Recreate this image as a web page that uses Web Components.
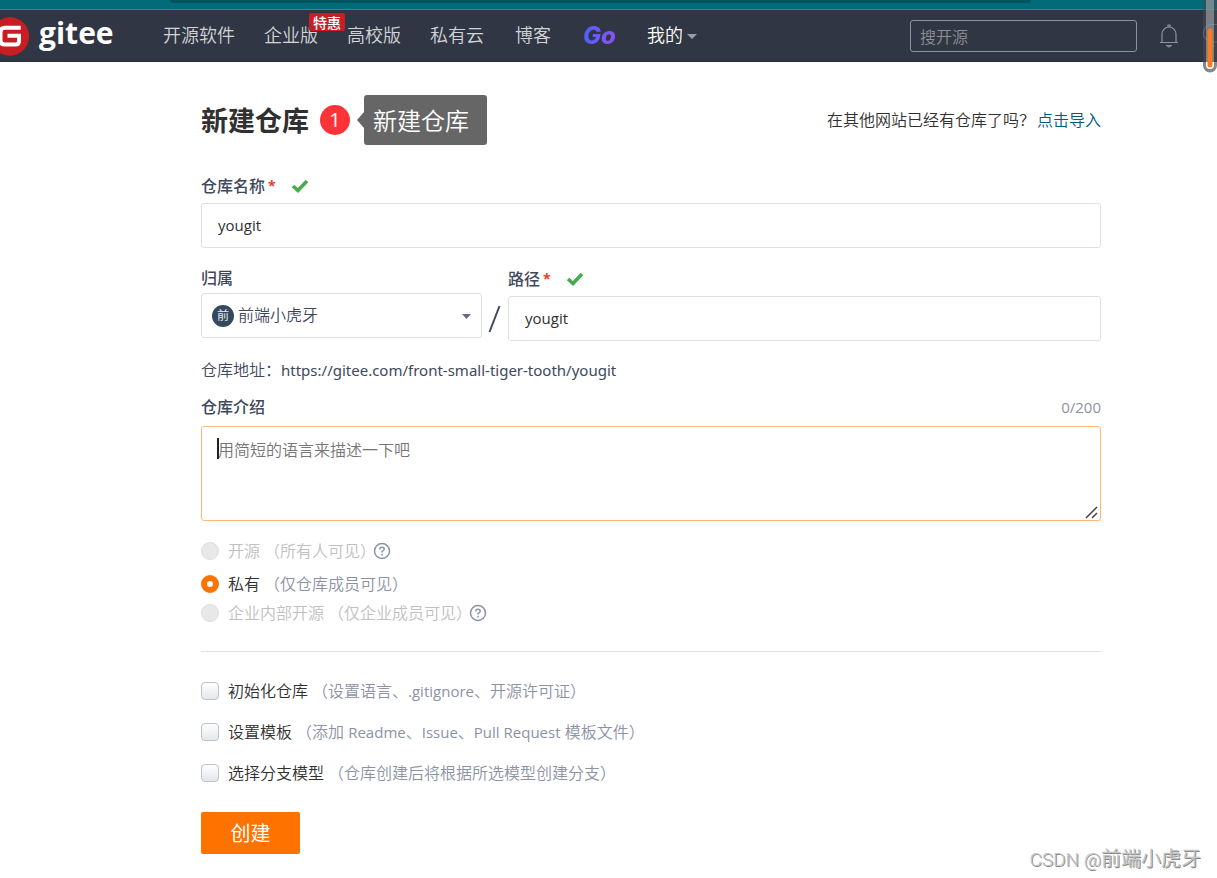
<!DOCTYPE html>
<html lang="zh-CN">
<head>
<meta charset="utf-8">
<meta name="viewport" content="width=device-width, initial-scale=1">
<title>新建仓库 - Gitee</title>
<style>
  body {
    margin: 0;
    background: #fff;
    color: #303030;
    font: 350 16px/24px "Open Sans", "Noto Sans CJK SC", sans-serif;
    --ink: #40485b;
    --muted: #8c92a4;
    --line: #dce0e8;
    --accent: #fe7300;
  }
</style>
</head>
<body>
<gitee-page></gitee-page>

<template id="t-page">
  <style>
    :host { display: block; position: relative; min-height: 878px; }
    main { padding: 33px 116px 24px 201px; }
    .pair { display: grid; grid-template-columns: 281px 26px 1fr; margin-top: 18px; }
    .slash { align-self: end; display: block; width: 26px; height: 45px; }
    .path { padding-top: 1px; }
    .address { margin: 17px 0 0; color: var(--ink); line-height: 24px; }
    .address span { font: 15px/24px "Noto Sans", sans-serif; }
    fieldset { border: 0; margin: 0; padding: 0; min-width: 0; }
    .visibility { margin-top: 18px; display: grid; grid-template-rows: 33px 29px 27px; padding-bottom: 23px; border-bottom: 1px solid var(--line); }
    .options { margin-top: 27px; display: grid; gap: 17px; }
    button { display: block; margin-top: 27px; width: 99px; height: 42px; border: 0; border-radius: 2px; background: var(--accent); color: #fff; font: 20px/42px "Noto Sans CJK SC", sans-serif; padding: 0; }
    .watermark { position: absolute; right: 16px; bottom: 4px; font: 350 20px/28px Roboto, "Noto Sans CJK SC", sans-serif; color: #c4c4c4; text-shadow: 1px 1px 0 #8a8a8a; }
    .watermark span { font-size: 19px; font-weight: 300; }
  </style>
  <gitee-topbar></gitee-topbar>
  <main>
    <page-title></page-title>
    <text-field name="name" label="仓库名称" value="yougit" style="margin-top:29px"></text-field>
    <div class="pair">
      <owner-field></owner-field>
      <svg class="slash" viewBox="0 0 26 45" aria-hidden="true"><path d="M7.500 36L17.500 10" stroke="#40485b" stroke-width="2" fill="none"/></svg>
      <text-field class="path" name="path" label="路径" value="yougit"></text-field>
    </div>
    <p class="address">仓库地址：<span>https://gitee.com/front-small-tiger-tooth/yougit</span></p>
    <intro-field></intro-field>
    <form>
      <fieldset class="visibility" aria-label="是否开源">
        <choice-item type="radio" disabled help label="开源">（所有人可见）</choice-item>
        <choice-item type="radio" checked label="私有">（仅仓库成员可见）</choice-item>
        <choice-item type="radio" disabled help label="企业内部开源">（仅企业成员可见）</choice-item>
      </fieldset>
      <fieldset class="options" aria-label="仓库设置">
        <choice-item type="checkbox" label="初始化仓库">（设置语言、<small>.gitignore</small>、开源许可证）</choice-item>
        <choice-item type="checkbox" label="设置模板">（添加 <small>Readme</small>、<small>Issue</small>、<small>Pull Request</small> 模板文件）</choice-item>
        <choice-item type="checkbox" label="选择分支模型">（仓库创建后将根据所选模型创建分支）</choice-item>
      </fieldset>
      <button type="button">创建</button>
    </form>
  </main>
  <div class="watermark"><span>CSDN @</span>前端小虎牙</div>
</template>

<template id="t-topbar">
  <style>
    :host { display: block; position: relative; }
    .strip { height: 9px; background: #016b79; border-bottom: 1px solid #258c98; padding: 0 186px 0 170px; }
    .strip div { height: 3px; background: #02545e; border-radius: 0 0 4px 4px; }
    header { display: flex; align-items: center; height: 51px; background: #303643; border-bottom: 1px solid #2c2b3a; }
    .logo { display: flex; align-items: center; width: 163px; height: 51px; text-decoration: none; color: #fff; }
    .logo svg { flex: none; }
    .logo b { margin: 0 0 5px 9px; font: 700 30px/36px "Open Sans", sans-serif; }
    nav { display: flex; gap: 29px; }
    .go { position: relative; width: 34px; margin: 1px 1px 0 3px; font: italic 800 24px/28px Inter, sans-serif; color: transparent; background: linear-gradient(90deg, #4b63f6, #9150f0); background-clip: text; -webkit-background-clip: text; text-decoration: none; }
    .search { margin-left: auto; width: 227px; height: 32px; box-sizing: border-box; border: 1px solid #8c92a4; border-radius: 3px; background: transparent; padding: 0 9px; color: #fff; font: 350 16px/24px "Noto Sans CJK SC", sans-serif; }
    .search::placeholder { color: #8f9091; opacity: 1; }
    .bell { margin: 0 38px 0 22px; display: block; }
    .bulb { position: absolute; right: 0; top: 22px; }
    .thumb { position: absolute; right: 0; top: 0; }
  </style>
  <div class="strip"><div></div></div>
  <header>
    <a class="logo" href="#"><svg width="30" height="40" viewBox="0 0 30 40" aria-hidden="true"><circle cx="10" cy="20.500" r="19.200" fill="#c71d23"/><path d="M20.700 11.700H5Q0.500 11.700 0.500 16V24.500Q0.500 28.500 5 28.500H15.500Q19 28.500 19 25V19.700H7.500" fill="none" stroke="#fff" stroke-width="4"/></svg><b>gitee</b></a>
    <nav>
      <nav-link>开源软件</nav-link>
      <nav-link tag="特惠">企业版</nav-link>
      <nav-link>高校版</nav-link>
      <nav-link>私有云</nav-link>
      <nav-link style="margin-left:2px">博客</nav-link>
      <a class="go" href="#">Go</a>
      <nav-link strong>我的</nav-link>
    </nav>
    <input class="search" type="search" placeholder="搜开源" aria-label="搜开源">
    <svg class="bell" width="20" height="24" viewBox="0 0 20 24" fill="none" stroke="#8c92a4" stroke-width="1.200" aria-hidden="true"><path d="M1 18.500H19M3 18.500V10a7 7 0 0 1 14 0V18.500M9 3V1H11V3M7 21.500H13M8.500 22Q10 24 11.500 22"/></svg>
  </header>
  <svg class="bulb" width="16" height="28" viewBox="0 0 16 28" fill="none" stroke="#8c92a4" stroke-width="1.200" aria-hidden="true"><path d="M16 2.500H11a8.500 8.500 0 0 0-4 16H9V24H14M10 20H16"/></svg>
  <svg class="thumb" width="14" height="73" viewBox="0 0 14 73" aria-hidden="true"><path d="M0-4H14V65.500a6.500 6.500 0 0 1-14 0Z" fill="#444a52" fill-opacity=".65"/><path d="M7-4V65" stroke="#b6bcc0" stroke-opacity=".5" stroke-width="8"/><path d="M3 62V65a4 4 0 0 0 8 0V62Z" fill="#fff"/><path d="M7 31V65" stroke="#fe7a1f" stroke-width="5" stroke-linecap="round"/></svg>
</template>

<template id="t-nav">
  <style>
    :host { display: block; position: relative; --c: #d2d4d8; }
    :host([strong]) { --c: #fff; }
    a { display: flex; align-items: center; color: var(--c); text-decoration: none; font: 350 18px/27px "Noto Sans CJK SC", sans-serif; }
    .tag { position: absolute; left: 45px; top: -8px; width: 36px; height: 18px; border-radius: 2px; background: #c71d23; color: #fff; text-align: center; font: 500 14px/18px "Noto Sans CJK SC", sans-serif; z-index: 1; }
    svg { margin: 3px 0 0 4px; }
  </style>
  <a href="#"><slot></slot><svg width="10" height="5" viewBox="0 0 10 5" aria-hidden="true"><path d="M0 0H10L5 5Z" fill="#9a9da5"/></svg></a>
  <span class="tag"></span>
</template>

<template id="t-title">
  <style>
    :host { display: flex; align-items: center; height: 50px; }
    h1 { margin: 0; font: 700 27px/40px "Noto Sans CJK SC", sans-serif; color: #303030; }
    .num { margin-left: 11px; width: 30px; height: 30px; border-radius: 50%; background: #fc3437; color: #fff; text-align: center; font: 20px/30px "Open Sans", sans-serif; }
    .tip { display: flex; align-items: center; margin-left: 7px; }
    .tip span { height: 50px; width: 123px; box-sizing: border-box; padding-left: 9px; background: #666; border-radius: 3px; color: #fff; font: 350 24px/50px "Noto Sans CJK SC", sans-serif; }
    .import { margin-left: auto; display: flex; gap: 2px; }
    a { color: #005980; text-decoration: none; }
  </style>
  <h1>新建仓库</h1>
  <span class="num">1</span>
  <div class="tip"><svg width="7" height="16" viewBox="0 0 7 16" aria-hidden="true"><path d="M7 0V16L0 8Z" fill="#666"/></svg><span>新建仓库</span></div>
  <div class="import"><span>在其他网站已经有仓库了吗？</span><a href="#">点击导入</a></div>
</template>

<template id="t-field">
  <style>
    :host { display: block; }
    .head { display: flex; align-items: center; height: 24px; margin-bottom: 5px; }
    label { color: var(--ink); font-weight: 500; }
    i { margin-left: 3px; color: #f0392c; font-style: normal; font-weight: 700; font-size: 14px; }
    svg { margin-left: 15px; }
    input { display: block; width: 100%; height: 45px; box-sizing: border-box; border: 1px solid var(--line); border-radius: 3px; padding: 0 16px 2px; background: #fff; color: #303030; font: 15px/24px "Open Sans", sans-serif; }
  </style>
  <div class="head"><label for="f"></label><i>*</i><svg width="18" height="14" viewBox="0 0 18 14" aria-hidden="true"><path d="M2 7L7 11.500L16 2" fill="none" stroke="#49ab4d" stroke-width="3.600"/></svg></div>
  <input id="f" type="text">
</template>

<template id="t-owner">
  <style>
    :host { display: block; }
    label { display: block; height: 24px; margin-bottom: 3px; color: var(--ink); font-weight: 500; }
    .box { display: flex; align-items: center; position: relative; height: 45px; box-sizing: border-box; border: 1px solid var(--line); border-radius: 3px; padding-left: 10px; }
    .avatar { flex: none; width: 22px; height: 22px; border-radius: 50%; background: #34495e; color: #e8ebee; text-align: center; font-size: 12px; font-weight: 400; line-height: 22px; }
    select { appearance: none; flex: 1; height: 43px; border: 0; background: transparent; color: var(--ink); padding: 0 30px 4px 4px; font: 350 16px/24px "Noto Sans CJK SC", sans-serif; }
    svg { position: absolute; right: 10px; top: 20px; }
  </style>
  <label for="o">归属</label>
  <div class="box"><span class="avatar">前</span><select id="o"><option>前端小虎牙</option></select><svg width="9" height="5" viewBox="0 0 9 5" aria-hidden="true"><path d="M0 0H9L4.500 5Z" fill="#666c7b"/></svg></div>
</template>

<template id="t-intro">
  <style>
    :host { display: block; margin-top: 13px; }
    .head { display: flex; justify-content: space-between; height: 24px; margin-bottom: 7px; }
    label { color: var(--ink); font-weight: 500; }
    .head span { color: var(--muted); font-size: 15px; font-weight: 400; }
    .box { position: relative; }
    textarea { display: block; width: 100%; height: 95px; box-sizing: border-box; border: 1px solid #ffb878; border-radius: 3px; padding: 10px 16px; margin: 0; resize: none; outline: 0; color: #303030; font: 350 16px/24px "Noto Sans CJK SC", sans-serif; }
    textarea::placeholder { color: #757575; opacity: 1; }
    .caret { position: absolute; left: 16px; top: 12px; width: 2px; height: 21px; background: #222; }
    svg { position: absolute; right: 3px; bottom: 2px; }
  </style>
  <div class="head"><label for="d">仓库介绍</label><span>0/200</span></div>
  <div class="box"><textarea id="d" placeholder="用简短的语言来描述一下吧"></textarea><span class="caret"></span><svg width="13" height="13" viewBox="0 0 13 13" aria-hidden="true"><path d="M1 12L12 1M7 12L12 7" fill="none" stroke="#444" stroke-width="1.500"/></svg></div>
</template>

<template id="t-choice">
  <style>
    :host { display: flex; align-items: center; height: 24px; --c: #303030; --n: var(--muted); }
    :host([disabled]) { --c: #c0c0c0; --n: #c0c0c0; }
    input { appearance: none; flex: none; width: 18px; height: 18px; margin: 0 9px 0 0; box-sizing: border-box; border: 1px solid #c0c2c6; border-radius: 4px; background: linear-gradient(#fff, #e3e6ea); }
    input[type=radio] { border-radius: 50%; }
    input:disabled { border-color: #dedede; background: #e8e8e8; }
    input:checked { border: 6px solid var(--accent); background: #fff; }
    label { color: var(--c); }
    .note { margin-left: 4px; color: var(--n); white-space: pre; }
    ::slotted(small) { font-size: 15px; font-weight: 400; }
    svg { margin-left: -3px; }
  </style>
  <input id="c"><label for="c"></label><span class="note"><slot></slot></span>
</template>

<script>
  const stamp = (host, id) => {
    const root = host.attachShadow({ mode: 'open' });
    root.append(document.getElementById(id).content.cloneNode(true));
    return root;
  };

  customElements.define('nav-link', class extends HTMLElement {
    connectedCallback() {
      if (this.shadowRoot) return;
      const root = stamp(this, 't-nav');
      if (!this.hasAttribute('strong')) root.querySelector('svg').remove();
      const tag = root.querySelector('.tag');
      if (this.hasAttribute('tag')) tag.textContent = this.getAttribute('tag');
      else tag.remove();
    }
  });

  customElements.define('text-field', class extends HTMLElement {
    connectedCallback() {
      if (this.shadowRoot) return;
      const root = stamp(this, 't-field');
      root.querySelector('label').textContent = this.getAttribute('label');
      const input = root.querySelector('input');
      input.name = this.getAttribute('name');
      input.value = this.getAttribute('value');
    }
  });

  customElements.define('choice-item', class extends HTMLElement {
    connectedCallback() {
      if (this.shadowRoot) return;
      const root = stamp(this, 't-choice');
      const input = root.querySelector('input');
      input.type = this.getAttribute('type');
      input.checked = this.hasAttribute('checked');
      input.disabled = this.hasAttribute('disabled');
      root.querySelector('label').textContent = this.getAttribute('label');
      if (this.hasAttribute('help')) {
        root.querySelector('.note').insertAdjacentHTML('afterend',
          '<svg width="18" height="18" viewBox="0 0 18 18" fill="none" stroke="#8c92a4" stroke-width="1.500" aria-hidden="true"><circle cx="9" cy="9" r="7.500"/><path d="M6.800 7.500Q6.800 5.300 9 5.300T11.200 7.300Q11.200 8.500 9 9.400V10.600M9 11.800V13.400"/></svg>');
      }
    }
  });

  for (const [name, id] of [['page-title', 't-title'], ['owner-field', 't-owner'], ['intro-field', 't-intro'], ['gitee-topbar', 't-topbar'], ['gitee-page', 't-page']]) {
    customElements.define(name, class extends HTMLElement {
      connectedCallback() { if (!this.shadowRoot) stamp(this, id); }
    });
  }
</script>
</body>
</html>
